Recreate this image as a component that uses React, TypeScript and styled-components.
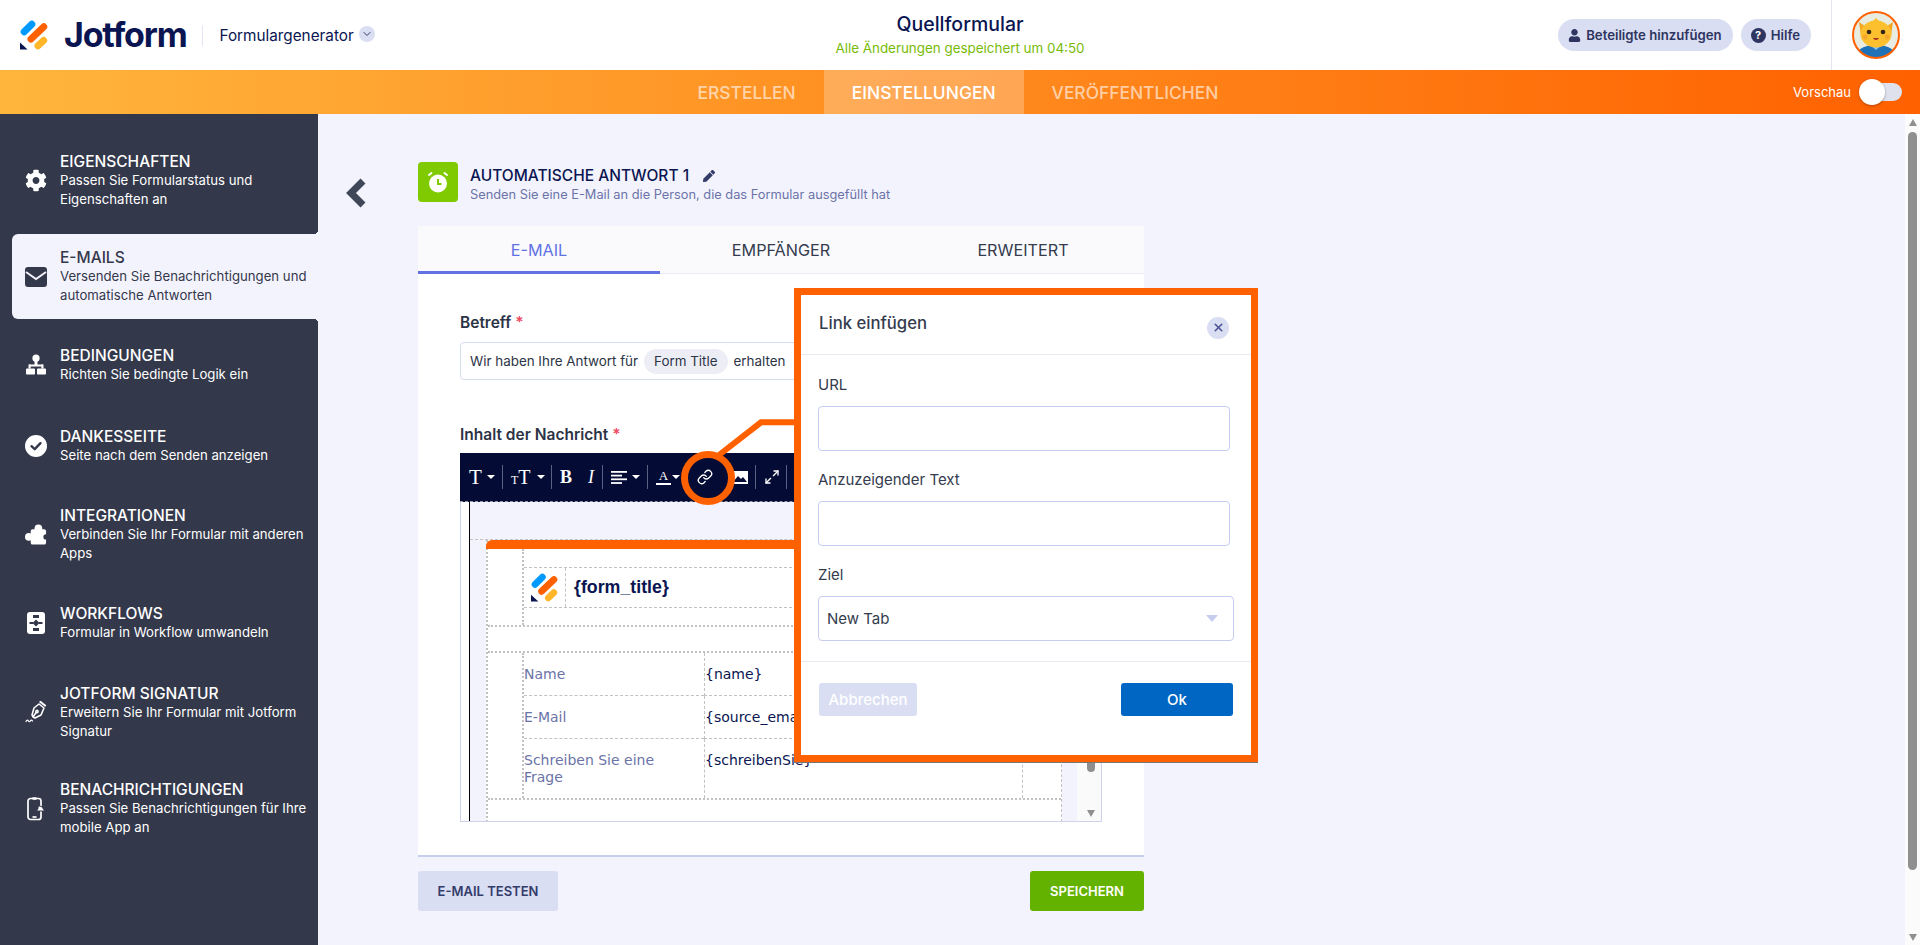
import React from "react";
import styled, { createGlobalStyle } from "styled-components";
import { FaCog, FaPen, FaUser } from "react-icons/fa";
import { Link as LinkIcon, Maximize2, ChevronDown, X } from "lucide-react";

const GlobalStyle = createGlobalStyle`
  html, body {
    margin: 0;
    height: 100%;
    overflow: hidden;
    background: #f3f3fe;
  }
  body {
    font-family: Inter, "Liberation Sans", sans-serif;
    color: #0a1551;
  }
  * { box-sizing: border-box; }
`;

const NAVY = "#0a1551";
const DARK = "#34384b";
const ORANGE = "#ff6100";
const PALE = "#dadef3";
const DASH = "#c2c2c2";

/* shared logo, also used inside the mail preview */
const Logo = ({ size }: { size: number }) => (
  <svg width={size} height={(size * 30) / 28} viewBox="0 0 28 30" fill="none" strokeLinecap="round" strokeWidth={7}>
    <path d="M4.2 11.8 11.8 4.2" stroke="#0099ff" />
    <path d="M11 19 23.8 6.8" stroke={ORANGE} />
    <path d="M18 25.8 23.6 20.4" stroke="#ffb629" />
    <path d="M0 22.5v7h7.6z" fill={NAVY} />
  </svg>
);

const PageRoot = styled.div`
  position: relative;
  width: 100%;
  height: 100vh;
  display: flex;
  flex-direction: column;
  overflow: hidden;
`;

/* top header */
const Header = styled.header`
  height: 70px;
  flex: none;
  background: #fff;
  display: grid;
  grid-template-columns: 1fr auto 1fr;
`;

const Brand = styled.div`
  display: flex;
  align-items: center;
  padding-left: 20px;
`;

const Wordmark = styled.span`
  margin-left: 16px;
  font-size: 34px;
  font-weight: 700;
  letter-spacing: -1.2px;
  color: ${NAVY};
  line-height: 1;
`;

const BrandRule = styled.span`
  width: 1px;
  height: 21px;
  margin: 0 16px 0 16px;
  background: #e3e5f5;
`;

const BuilderName = styled.span`
  font-size: 15.3px;
  color: ${NAVY};
`;

const RoundChevron = styled.span`
  width: 16px;
  height: 16px;
  margin-left: 5px;
  margin-top: -2px;
  border-radius: 50%;
  background: ${PALE};
  display: flex;
  align-items: center;
  justify-content: center;
  color: #343c6a;
`;

const CenterTitle = styled.div`
  display: flex;
  flex-direction: column;
  align-items: center;
  padding-top: 13px;
`;

const FormName = styled.div`
  font-size: 19.5px;
  line-height: 22px;
  font-weight: 500;
  color: ${NAVY};
`;

const SavedNote = styled.div`
  margin-top: 4px;
  font-size: 13.4px;
  line-height: 18px;
  color: #78bb07;
`;

const HeaderRight = styled.div`
  display: flex;
  justify-content: flex-end;
  align-items: center;
`;

const Pill = styled.button`
  height: 32px;
  padding: 0 11px 0 10px;
  margin-left: 8px;
  border: 0;
  border-radius: 16px;
  background: ${PALE};
  display: flex;
  align-items: center;
  gap: 5px;
  font: 600 13.2px Inter, sans-serif;
  color: #2e3560;
`;

const HelpDot = styled.span`
  width: 15px;
  height: 15px;
  border-radius: 50%;
  background: #2e3560;
  color: #fff;
  font-size: 11px;
  font-weight: 700;
  line-height: 15px;
  text-align: center;
`;

const AvatarSlot = styled.div`
  align-self: stretch;
  width: 89px;
  margin-left: 20px;
  border-left: 1px solid #e3e5f5;
  display: flex;
  align-items: center;
  justify-content: center;
`;

/* orange step bar */
const StepBar = styled.nav`
  height: 44px;
  flex: none;
  display: grid;
  grid-template-columns: 1fr auto 1fr;
  background: linear-gradient(90deg, #ffb53c 0%, #ff6100 100%);
`;

const Steps = styled.div`
  grid-column: 2;
  display: flex;
  margin-right: 4px;
`;

const Step = styled.div<{ $active?: boolean }>`
  padding: 0 28px;
  display: flex;
  align-items: center;
  font-size: 17.4px;
  font-weight: 500;
  color: ${(p) => (p.$active ? "#fff" : "rgba(255,255,255,0.62)")};
  background: ${(p) => (p.$active ? "rgba(255,255,255,0.25)" : "transparent")};
`;

const PreviewSwitch = styled.div`
  display: flex;
  align-items: center;
  justify-content: flex-end;
  padding-right: 18px;
  font-size: 13px;
  color: #fff;
`;

const SwitchTrack = styled.div`
  position: relative;
  width: 40px;
  height: 18px;
  margin-left: 11px;
  border-radius: 9px;
  background: #dfe1ec;
`;

const SwitchKnob = styled.div`
  position: absolute;
  left: -3px;
  top: -4px;
  width: 26px;
  height: 26px;
  border-radius: 50%;
  background: #fff;
  box-shadow: 0 1px 3px rgba(0, 0, 0, 0.3);
`;

/* body */
const Body = styled.div`
  flex: 1;
  min-height: 0;
  display: flex;
`;

const Sidebar = styled.aside`
  width: 318px;
  flex: none;
  padding: 23.5px 0 0 12px;
  background: ${DARK};
  display: flex;
  flex-direction: column;
  gap: 11.7px;
`;

const SideItem = styled.div<{ $active?: boolean; $tall?: boolean }>`
  position: relative;
  min-height: ${(p) => (p.$tall ? 85 : 69)}px;
  padding-left: 13px;
  display: flex;
  align-items: center;
  gap: 13px;
  border-radius: 6px 0 0 6px;
  background: ${(p) => (p.$active ? "#f3f3fe" : "transparent")};
  color: ${(p) => (p.$active ? DARK : "#fff")};

  ${(p) =>
    p.$active &&
    `
    &::before, &::after {
      content: "";
      position: absolute;
      right: 0;
      width: 4px;
      height: 4px;
    }
    &::before {
      top: -4px;
      background: radial-gradient(circle at 0 0, ${DARK} 3.8px, #f3f3fe 4px);
    }
    &::after {
      bottom: -4px;
      background: radial-gradient(circle at 0 100%, ${DARK} 3.8px, #f3f3fe 4px);
    }
  `}
`;

const SideIcon = styled.span`
  width: 22px;
  height: 22px;
  flex: none;
  display: flex;
  align-items: center;
  justify-content: center;
`;

const SideText = styled.div`
  min-width: 0;
`;

const SideTitle = styled.div`
  font-size: 15.5px;
  line-height: 19px;
  font-weight: 500;
`;

const SideDesc = styled.div`
  font-size: 13.2px;
  line-height: 19px;
`;

const Main = styled.main`
  flex: 1;
  min-width: 0;
  padding: 48px 0 0 28px;
  display: flex;
  gap: 51px;
  background: #f3f3fe;
`;

const BackChevron = styled.svg`
  flex: none;
  margin-top: 16px;
`;

const Column = styled.div`
  width: 726px;
  flex: none;
`;

const FormHead = styled.div`
  height: 40px;
  display: flex;
  align-items: center;
  gap: 12px;
`;

const AlarmTile = styled.div`
  width: 40px;
  height: 40px;
  border-radius: 4px;
  background: #7fca00;
  display: flex;
  align-items: center;
  justify-content: center;
`;

const HeadText = styled.div`
  margin-top: 5px;
`;

const HeadTitle = styled.div`
  display: flex;
  align-items: center;
  gap: 14px;
  font-size: 15.5px;
  line-height: 20px;
  font-weight: 500;
  color: ${NAVY};
`;

const HeadSub = styled.div`
  font-size: 12.8px;
  line-height: 18px;
  color: #6c73a8;
`;

const Card = styled.section`
  margin-top: 24px;
  background: #fff;
  border-bottom: 2px solid #c8ceed;
`;

const Tabs = styled.div`
  height: 48px;
  display: grid;
  grid-template-columns: repeat(3, 1fr);
  background: #fafafc;
  border-bottom: 1px solid #e9ebf5;
`;

const Tab = styled.div<{ $active?: boolean }>`
  display: flex;
  align-items: center;
  justify-content: center;
  font-size: 16.2px;
  color: ${(p) => (p.$active ? "#6272e4" : "#343c4e")};
  box-shadow: ${(p) => (p.$active ? "inset 0 -3px 0 #6272e4" : "none")};
  margin-bottom: -1px;
`;

const CardBody = styled.div`
  padding: 39px 42px 33px;
`;

const FieldLabel = styled.div<{ $gap?: boolean }>`
  margin-top: ${(p) => (p.$gap ? 45 : 0)}px;
  margin-bottom: ${(p) => (p.$gap ? 8 : 9)}px;
  font-size: 15.5px;
  line-height: 20px;
  font-weight: 600;
  color: #2c3345;
`;

const Required = styled.span`
  color: #ef4a5f;
`;

const SubjectInput = styled.div`
  height: 38px;
  padding-left: 9px;
  border: 1px solid #d8dcf0;
  border-radius: 4px;
  display: flex;
  align-items: center;
  gap: 6px;
  font-size: 13.4px;
  color: #2c3345;
`;

const Chip = styled.span`
  height: 25px;
  padding: 0 10px;
  border-radius: 13px;
  background: #edeef5;
  display: flex;
  align-items: center;
`;

const Editor = styled.div`
  height: 369px;
  border: 1px solid #cfd3ea;
  border-top: 0;
  display: flex;
  flex-direction: column;
`;

const Toolbar = styled.div`
  height: 49px;
  flex: none;
  margin: 0 -1px;
  background: #040b35;
  border-bottom: 1px dashed #9a9dab;
  display: flex;
  align-items: center;
  color: #fff;
`;

const ToolGroup = styled.div<{ $w: number; $gap?: number; $pad?: number; $bare?: boolean }>`
  position: relative;
  width: ${(p) => p.$w}px;
  height: 24px;
  padding-left: ${(p) => p.$pad ?? 8}px;
  display: flex;
  align-items: center;
  gap: ${(p) => p.$gap ?? 5}px;
  border-right: ${(p) => (p.$bare ? "0" : "1px solid #5b6182")};
  font-family: "Liberation Serif", serif;
`;

const Caret = styled.span`
  width: 0;
  height: 0;
  border-left: 4px solid transparent;
  border-right: 4px solid transparent;
  border-top: 4px solid #fff;
`;

const Glyph = styled.span<{ $size: number; $bold?: boolean; $italic?: boolean }>`
  font-size: ${(p) => p.$size}px;
  font-weight: ${(p) => (p.$bold ? 700 : 400)};
  font-style: ${(p) => (p.$italic ? "italic" : "normal")};
  line-height: 1;
`;

const UnderA = styled.span`
  width: 15px;
  font-size: 13px;
  line-height: 14px;
  text-align: center;
  border-bottom: 2px solid #fff;
`;

const EditorBody = styled.div`
  flex: 1;
  min-height: 0;
  display: flex;
`;

const Gutter = styled.div`
  width: 9px;
  flex: none;
  background: #fff;
  border-right: 1px solid #000;
`;

const Canvas = styled.div`
  flex: 1;
  min-width: 0;
  padding: 37px 15px 0 16px;
  background: #f3f3fe;
  overflow: hidden;
`;

const CanvasRule = styled.div`
  height: 1px;
  margin: 0 -15px 0 -16px;
  border-top: 1px dashed ${DASH};
`;

const MailWrap = styled.div`
  position: relative;
  height: 100%;
  background: #fff;
  border-left: 2px dotted ${DASH};
  border-right: 1px dashed ${DASH};
`;

const OrangeStrip = styled.div`
  height: 9px;
  margin-left: -2px;
  border-radius: 6px 6px 0 0;
  background: ${ORANGE};
`;

const MailSection = styled.div<{ $h?: number }>`
  padding: 0 38px 0 34px;
  height: ${(p) => (p.$h ? `${p.$h}px` : "auto")};
  border-bottom: 2px dotted ${DASH};
`;

const MailInner = styled.div`
  height: 100%;
  border-left: 2px dotted ${DASH};
  border-right: 1px dashed ${DASH};
`;

const LogoHolder = styled.div`
  padding: 18px 0;
`;

const LogoRow = styled.div`
  height: 41px;
  display: flex;
  align-items: center;
  border-top: 1px dashed ${DASH};
  border-bottom: 1px dashed ${DASH};
`;

const LogoCell = styled.div`
  width: 42px;
  height: 100%;
  display: flex;
  align-items: center;
  justify-content: center;
  border-right: 1px dashed ${DASH};
`;

const FormTitle = styled.span`
  margin-left: 8px;
  font: 700 17.8px "Liberation Sans", sans-serif;
  color: ${NAVY};
`;

const DataGrid = styled.div`
  display: grid;
  grid-template-columns: 180px 1fr;
`;

const DataCell = styled.div<{ $value?: boolean; $last?: boolean }>`
  padding: 13px ${(p) => (p.$value ? 2 : 30)}px 12px ${(p) => (p.$value ? 0 : 0)}px;
  font: 14px/17px "DejaVu Sans", sans-serif;
  color: ${(p) => (p.$value ? NAVY : "#6b74a8")};
  border-left: ${(p) => (p.$value ? `1px dashed ${DASH}` : "0")};
  border-bottom: ${(p) => (p.$last ? "0" : `1px dashed ${DASH}`)};
`;

const EditorScroll = styled.div`
  width: 24px;
  flex: none;
  background: #fafafa;
  display: flex;
  flex-direction: column;
  align-items: center;
  padding: 200px 0 4px 3px;
`;

const MiniThumb = styled.div`
  width: 8px;
  height: 70px;
  border-radius: 4px;
  background: #8f8f8f;
`;

const ArrowDown = styled.span`
  margin-top: auto;
  width: 0;
  height: 0;
  border-left: 4px solid transparent;
  border-right: 4px solid transparent;
  border-top: 7px solid #8f8f8f;
`;

const ArrowUp = styled.span`
  width: 0;
  height: 0;
  border-left: 4px solid transparent;
  border-right: 4px solid transparent;
  border-bottom: 7px solid #8f8f8f;
`;

const Actions = styled.div`
  margin-top: 14px;
  display: flex;
  justify-content: space-between;
`;

const ActionButton = styled.button<{ $green?: boolean }>`
  height: 40px;
  border: 0;
  border-radius: 3px;
  padding: 0;
  width: ${(p) => (p.$green ? 114 : 140)}px;
  background: ${(p) => (p.$green ? "#64b200" : PALE)};
  color: ${(p) => (p.$green ? "#fff" : "#343c6a")};
  font: 600 13px Inter, sans-serif;
`;

const PageScroll = styled.div`
  width: 15px;
  flex: none;
  background: #fbfbfb;
  display: flex;
  flex-direction: column;
  align-items: center;
  padding: 5px 0 4px;
`;

const PageThumb = styled.div`
  width: 9px;
  height: 738px;
  margin-top: 6px;
  border-radius: 5px;
  background: #8f8f8f;
`;

/* modal and its pointer lie on top of the page */
const Pointer = styled.svg`
  position: absolute;
  left: 677px;
  top: 409px;
`;

const Modal = styled.div`
  position: absolute;
  left: 794px;
  top: 288px;
  width: 464px;
  height: 474px;
  border: 7px solid ${ORANGE};
  background: #fff;
  box-shadow: 0 1px 0 #777;
  display: flex;
  flex-direction: column;
`;

const ModalHead = styled.div`
  height: 60px;
  flex: none;
  padding: 0 17px 0 18px;
  display: flex;
  align-items: center;
  justify-content: space-between;
  border-bottom: 1px solid #e9e9f3;
`;

const ModalTitle = styled.div`
  font-size: 16.7px;
  font-weight: 500;
  color: #343c4e;
  margin-top: -4px;
`;

const CloseDot = styled.span`
  width: 22px;
  height: 22px;
  border-radius: 50%;
  background: ${PALE};
  color: #4c5295;
  display: flex;
  align-items: center;
  justify-content: center;
  margin: 6px 5px 0 0;
`;

const ModalBody = styled.div`
  flex: 1;
  padding: 20px 17px 0;
  display: flex;
  flex-direction: column;
  gap: 19px;
`;

const ModalField = styled.label`
  display: flex;
  flex-direction: column;
  gap: 11px;
  font-size: 15px;
  line-height: 20px;
  color: #343c4e;
`;

const TextBox = styled.div<{ $wide?: boolean }>`
  width: ${(p) => (p.$wide ? 416 : 412)}px;
  height: 45px;
  padding: 0 8px;
  border: 1px solid #c6cdf0;
  border-radius: 4px;
  display: flex;
  align-items: center;
  justify-content: space-between;
  font-size: 15px;
  color: #343c4e;
`;

const SelectArrow = styled.span`
  margin-right: 7px;
  width: 0;
  height: 0;
  border-left: 6px solid transparent;
  border-right: 6px solid transparent;
  border-top: 7px solid #c6cdf0;
`;

const ModalFoot = styled.div`
  height: 94px;
  flex: none;
  padding: 21px 18px 0 18px;
  display: flex;
  justify-content: space-between;
  align-items: flex-start;
  border-top: 1px solid #e9e9f3;
`;

const ModalButton = styled.button<{ $primary?: boolean }>`
  height: 33px;
  width: ${(p) => (p.$primary ? 112 : 98)}px;
  border: 0;
  border-radius: 3px;
  padding: 0;
  background: ${(p) => (p.$primary ? "#0066c3" : PALE)};
  color: #fff;
  font: 500 15px Inter, sans-serif;
`;

const Mail = () => (
  <svg width="22" height="22" viewBox="0 0 22 22">
    <rect y="1" width="22" height="20" rx="3" fill="currentColor" />
    <path d="M1 6l10 7 10-7" fill="none" stroke="#f3f3fe" strokeWidth="2" />
  </svg>
);

const Flow = () => (
  <svg width="22" height="22" viewBox="0 0 22 22" fill="#fff">
    <circle cx="11" cy="4.200" r="3.600" />
    <rect x="9.500" y="7" width="3" height="5" />
    <rect x="4" y="10.500" width="14" height="2" />
    <rect x="3.500" y="10.500" width="2.200" height="4" />
    <rect x="16.300" y="10.500" width="2.200" height="4" />
    <rect x="1" y="14.500" width="9" height="6" rx="0.800" />
    <rect x="12" y="14.500" width="9" height="6" rx="0.800" />
  </svg>
);

const Puzzle = () => (
  <svg width="23" height="23" viewBox="0 0 23 23" fill="#fff">
    <rect x="6" y="6" width="16" height="16" rx="2" />
    <circle cx="14" cy="5" r="4" />
    <circle cx="4" cy="14" r="4" />
    <circle cx="22" cy="14" r="2.800" fill={DARK} />
  </svg>
);

const Check = () => (
  <svg width="22" height="22" viewBox="0 0 22 22">
    <circle cx="11" cy="11" r="11" fill="#fff" />
    <path d="M6.500 11.200l3.200 3 5.800-6" fill="none" stroke={DARK} strokeWidth="2.400" strokeLinecap="round" strokeLinejoin="round" />
  </svg>
);

const Workflow = () => (
  <svg width="18" height="22" viewBox="0 0 18 22">
    <rect width="18" height="22" rx="3" fill="#fff" />
    <g fill={DARK}>
      <rect x="6" y="3" width="6" height="3" />
      <path d="M9 7.500l3.500 3.500L9 14.500 5.500 11z" />
      <rect x="2.500" y="10" width="3.500" height="2" />
      <rect x="12" y="10" width="3.500" height="2" />
      <rect x="6" y="16" width="6" height="3" />
    </g>
  </svg>
);

const Signature = () => (
  <svg width="22" height="22" viewBox="0 0 22 22" fill="none" stroke="#fff" strokeWidth="1.600" strokeLinejoin="round">
    <path d="M14 3l5 4-3 7-6 3-2-1-1-2 2-7z" />
    <path d="M15.500 1l4.500 3.500" strokeLinecap="round" strokeWidth="2.200" />
    <circle cx="12" cy="10.500" r="1.100" />
    <path d="M8 16l3.500-5" />
    <path d="M1 20.500c1-2 2-1.500 2.500-.5s1.500 1 2-.2 1.200-.8 2 .200" strokeLinecap="round" strokeWidth="1.200" />
  </svg>
);

const PhoneBell = () => (
  <svg width="20" height="24" viewBox="0 0 20 24" fill="none" stroke="#fff" strokeWidth="1.700">
    <rect x="2" y="1.500" width="13" height="21" rx="2.500" />
    <path d="M6.500 1.500h4" strokeWidth="2.500" />
    <path d="M6.500 20h4" />
    <path d="M12 9.500a3.500 3.500 0 0 1 5 2l1.800 2.500H10.500L12 11.500z" fill="#fff" stroke={DARK} strokeWidth="1" />
  </svg>
);

const Alarm = () => (
  <svg width="24" height="24" viewBox="0 0 24 24">
    <circle cx="12" cy="13.500" r="9" fill="#fff" />
    <path d="M12 9v5h3.500" fill="none" stroke="#7fca00" strokeWidth="2" />
    <path d="M3 5l2.500-2M21 5l-2.500-2" stroke="#fff" strokeWidth="2" strokeLinecap="round" />
  </svg>
);

const Avatar = () => (
  <svg width="48" height="48" viewBox="0 0 48 48">
    <defs>
      <clipPath id="avatarClip">
        <circle cx="24" cy="24" r="22.500" />
      </clipPath>
    </defs>
    <g clipPath="url(#avatarClip)">
      <rect width="48" height="48" fill="#e9ece0" />
      <path d="M4 48c0-10 8-14 20-14s20 4 20 14z" fill="#1f72b8" />
      <path d="M18 34l6 5 6-5-6-2z" fill="#8cc0e8" />
      <path d="M7 11l9 6-7 8zM41 11l-9 6 7 8z" fill="#f5a623" />
      <ellipse cx="24" cy="23" rx="15.500" ry="13.500" fill="#fcc02e" />
      <path d="M21 10l3-3 3 3z" fill="#fcc02e" />
      <circle cx="17" cy="21" r="2.300" fill="#33251c" />
      <circle cx="31" cy="21" r="2.300" fill="#33251c" />
      <circle cx="13" cy="26" r="2.500" fill="#f7a72c" />
      <circle cx="35" cy="26" r="2.500" fill="#f7a72c" />
      <path d="M21 27c1 2.500 5 2.500 6 0z" fill="#a8331f" />
    </g>
    <circle cx="24" cy="24" r="23" fill="none" stroke={ORANGE} strokeWidth="2" />
  </svg>
);

const sideItems = [
  { title: "EIGENSCHAFTEN", desc: ["Passen Sie Formularstatus und", "Eigenschaften an"], icon: <FaCog size={23} /> },
  { title: "E-MAILS", desc: ["Versenden Sie Benachrichtigungen und", "automatische Antworten"], icon: <Mail />, active: true },
  { title: "BEDINGUNGEN", desc: ["Richten Sie bedingte Logik ein"], icon: <Flow /> },
  { title: "DANKESSEITE", desc: ["Seite nach dem Senden anzeigen"], icon: <Check /> },
  { title: "INTEGRATIONEN", desc: ["Verbinden Sie Ihr Formular mit anderen", "Apps"], icon: <Puzzle /> },
  { title: "WORKFLOWS", desc: ["Formular in Workflow umwandeln"], icon: <Workflow /> },
  { title: "JOTFORM SIGNATUR", desc: ["Erweitern Sie Ihr Formular mit Jotform", "Signatur"], icon: <Signature /> },
  { title: "BENACHRICHTIGUNGEN", desc: ["Passen Sie Benachrichtigungen für Ihre", "mobile App an"], icon: <PhoneBell /> },
];

const rows = [
  { label: "Name", value: "{name}" },
  { label: "E-Mail", value: "{source_email}" },
  { label: "Schreiben Sie eine Frage", value: "{schreibenSie}" },
];

const App = () => {
  return (
    <PageRoot>
      <GlobalStyle />
      <Header>
        <Brand>
          <Logo size={28} />
          <Wordmark>Jotform</Wordmark>
          <BrandRule />
          <BuilderName>Formulargenerator</BuilderName>
          <RoundChevron>
            <ChevronDown size={12} />
          </RoundChevron>
        </Brand>
        <CenterTitle>
          <FormName>Quellformular</FormName>
          <SavedNote>Alle Änderungen gespeichert um 04:50</SavedNote>
        </CenterTitle>
        <HeaderRight>
          <Pill>
            <FaUser size={13} />
            Beteiligte hinzufügen
          </Pill>
          <Pill>
            <HelpDot>?</HelpDot>
            Hilfe
          </Pill>
          <AvatarSlot>
            <Avatar />
          </AvatarSlot>
        </HeaderRight>
      </Header>

      <StepBar>
        <Steps>
          <Step>ERSTELLEN</Step>
          <Step $active>EINSTELLUNGEN</Step>
          <Step>VERÖFFENTLICHEN</Step>
        </Steps>
        <PreviewSwitch>
          Vorschau
          <SwitchTrack>
            <SwitchKnob />
          </SwitchTrack>
        </PreviewSwitch>
      </StepBar>

      <Body>
        <Sidebar>
          {sideItems.map((item) => (
            <SideItem key={item.title} $active={item.active} $tall={item.desc.length > 1}>
              <SideIcon>{item.icon}</SideIcon>
              <SideText>
                <SideTitle>{item.title}</SideTitle>
                {item.desc.map((line) => (
                  <SideDesc key={line}>{line}</SideDesc>
                ))}
              </SideText>
            </SideItem>
          ))}
        </Sidebar>

        <Main>
          <BackChevron width="21" height="30" viewBox="0 0 21 30">
            <path d="M17 3 5 15l12 12" fill="none" stroke="#3f4759" strokeWidth="7" />
          </BackChevron>
          <Column>
            <FormHead>
              <AlarmTile>
                <Alarm />
              </AlarmTile>
              <HeadText>
                <HeadTitle>
                  AUTOMATISCHE ANTWORT 1
                  <FaPen size={12} color="#343c6a" />
                </HeadTitle>
                <HeadSub>Senden Sie eine E-Mail an die Person, die das Formular ausgefüllt hat</HeadSub>
              </HeadText>
            </FormHead>

            <Card>
              <Tabs>
                <Tab $active>E-MAIL</Tab>
                <Tab>EMPFÄNGER</Tab>
                <Tab>ERWEITERT</Tab>
              </Tabs>
              <CardBody>
                <FieldLabel>
                  Betreff <Required>*</Required>
                </FieldLabel>
                <SubjectInput>
                  Wir haben Ihre Antwort für
                  <Chip>Form Title</Chip>
                  erhalten
                </SubjectInput>
                <FieldLabel $gap>
                  Inhalt der Nachricht <Required>*</Required>
                </FieldLabel>
                <Editor>
                  <Toolbar>
                    <ToolGroup $w={43} $pad={9}>
                      <Glyph $size={21}>T</Glyph>
                      <Caret />
                    </ToolGroup>
                    <ToolGroup $w={49} $gap={6} $pad={8}>
                      <span>
                        <Glyph $size={12}>T</Glyph>
                        <Glyph $size={20}>T</Glyph>
                      </span>
                      <Caret />
                    </ToolGroup>
                    <ToolGroup $w={51} $gap={16} $pad={8}>
                      <Glyph $size={18} $bold>
                        B
                      </Glyph>
                      <Glyph $size={18} $italic>
                        I
                      </Glyph>
                    </ToolGroup>
                    <ToolGroup $w={45}>
                      <svg width="16" height="13" viewBox="0 0 16 13" fill="#fff">
                        <rect width="16" height="1.800" />
                        <rect y="3.700" width="11" height="1.800" />
                        <rect y="7.400" width="16" height="1.800" />
                        <rect y="11.100" width="11" height="1.800" />
                      </svg>
                      <Caret />
                    </ToolGroup>
                    <ToolGroup $w={39} $gap={1}>
                      <UnderA>A</UnderA>
                      <Caret />
                    </ToolGroup>
                    <ToolGroup $w={69} $gap={19} $pad={10}>
                      <LinkIcon size={16} strokeWidth={2} />
                      <svg width="16" height="13" viewBox="0 0 16 13">
                        <rect width="16" height="13" fill="#fff" />
                        <path d="M1 11l5-6 3 3 2-2 4 5z" fill="#040b35" />
                      </svg>
                    </ToolGroup>
                    <ToolGroup $w={31}>
                      <Maximize2 size={16} strokeWidth={2} />
                    </ToolGroup>
                  </Toolbar>
                  <EditorBody>
                    <Gutter />
                    <Canvas>
                      <CanvasRule />
                      <MailWrap>
                        <OrangeStrip />
                        <MailSection $h={78}>
                          <MailInner>
                            <LogoHolder>
                              <LogoRow>
                                <LogoCell>
                                  <Logo size={27} />
                                </LogoCell>
                                <FormTitle>{"{form_title}"}</FormTitle>
                              </LogoRow>
                            </LogoHolder>
                          </MailInner>
                        </MailSection>
                        <MailSection $h={26} />
                        <MailSection>
                          <MailInner>
                            <DataGrid>
                              {rows.map((row, i) => (
                                <React.Fragment key={row.label}>
                                  <DataCell $last={i === rows.length - 1}>{row.label}</DataCell>
                                  <DataCell $value $last={i === rows.length - 1}>
                                    {row.value}
                                  </DataCell>
                                </React.Fragment>
                              ))}
                            </DataGrid>
                          </MailInner>
                        </MailSection>
                      </MailWrap>
                    </Canvas>
                    <EditorScroll>
                      <MiniThumb />
                      <ArrowDown />
                    </EditorScroll>
                  </EditorBody>
                </Editor>
              </CardBody>
            </Card>

            <Actions>
              <ActionButton>E-MAIL TESTEN</ActionButton>
              <ActionButton $green>SPEICHERN</ActionButton>
            </Actions>
          </Column>
        </Main>

        <PageScroll>
          <ArrowUp />
          <PageThumb />
          <ArrowDown />
        </PageScroll>
      </Body>

      <Pointer width="120" height="100" viewBox="0 0 120 100" fill="none" stroke={ORANGE}>
        <circle cx="31" cy="69" r="23.500" strokeWidth="7" />
        <path d="M42 46 84 13.300h34" strokeWidth="6" />
      </Pointer>

      <Modal>
        <ModalHead>
          <ModalTitle>Link einfügen</ModalTitle>
          <CloseDot>
            <X size={13} strokeWidth={3} />
          </CloseDot>
        </ModalHead>
        <ModalBody>
          <ModalField>
            URL
            <TextBox />
          </ModalField>
          <ModalField>
            Anzuzeigender Text
            <TextBox />
          </ModalField>
          <ModalField>
            Ziel
            <TextBox $wide>
              New Tab
              <SelectArrow />
            </TextBox>
          </ModalField>
        </ModalBody>
        <ModalFoot>
          <ModalButton>Abbrechen</ModalButton>
          <ModalButton $primary>Ok</ModalButton>
        </ModalFoot>
      </Modal>
    </PageRoot>
  );
};

export default App;
